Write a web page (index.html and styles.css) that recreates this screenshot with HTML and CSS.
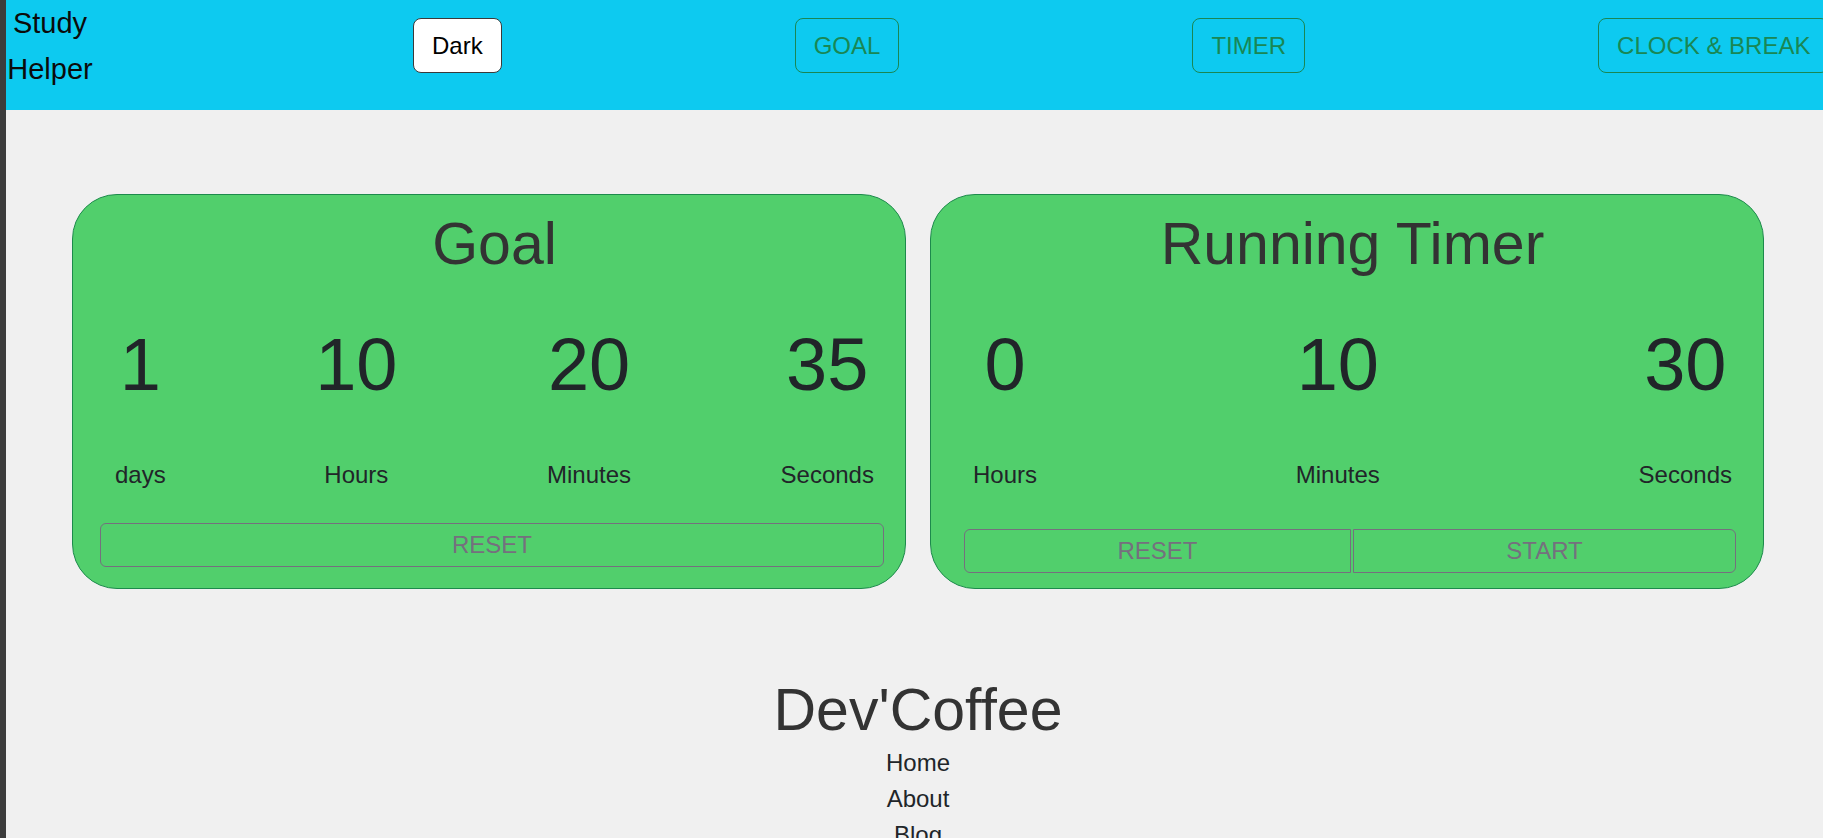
FILE: index.html
```html
<!DOCTYPE html>
<html lang="en">
<head>
<meta charset="utf-8">
<title>Study Helper</title>
<link rel="stylesheet" href="styles.css">
</head>
<body>
  <header class="topbar">
    <div class="brand">Study Helper</div>
    <nav class="nav">
      <button class="nav-btn nav-btn-light">Dark</button>
      <div class="nav-links">
        <button class="nav-btn nav-btn-success">GOAL</button>
        <button class="nav-btn nav-btn-success">TIMER</button>
        <button class="nav-btn nav-btn-success">CLOCK &amp; BREAK</button>
      </div>
    </nav>
  </header>

  <main class="panels">
    <section class="card">
      <div class="card-body">
        <h1 class="card-title">Goal</h1>
        <div class="units">
          <div class="unit"><span class="num">1</span><span class="label">days</span></div>
          <div class="unit"><span class="num">10</span><span class="label">Hours</span></div>
          <div class="unit"><span class="num">20</span><span class="label">Minutes</span></div>
          <div class="unit"><span class="num">35</span><span class="label">Seconds</span></div>
        </div>
      </div>
      <div class="actions actions-goal">
        <button class="btn-outline btn-single">RESET</button>
      </div>
    </section>

    <section class="card">
      <div class="card-body">
        <h1 class="card-title">Running Timer</h1>
        <div class="units">
          <div class="unit"><span class="num">0</span><span class="label">Hours</span></div>
          <div class="unit"><span class="num">10</span><span class="label">Minutes</span></div>
          <div class="unit"><span class="num">30</span><span class="label">Seconds</span></div>
        </div>
      </div>
      <div class="actions actions-timer">
        <button class="btn-outline btn-left">RESET</button>
        <button class="btn-outline btn-right">START</button>
      </div>
    </section>
  </main>

  <footer class="footer">
    <h2 class="footer-title">Dev'Coffee</h2>
    <ul class="footer-links">
      <li><a href="#">Home</a></li>
      <li><a href="#">About</a></li>
      <li><a href="#">Blog</a></li>
    </ul>
  </footer>
</body>
</html>
```

FILE: styles.css
```css
html {
  background: #f0f0f0;
}

body {
  box-sizing: border-box;
  margin: 0;
  min-width: 1830px;
  min-height: 100vh;
  border-left: 6px solid #3c3c3c;
  background: #f0f0f0;
  font-family: "Liberation Sans", Arial, sans-serif;
  color: #212529;
}

/* ---------- header ---------- */
.topbar {
  display: flex;
  align-items: flex-start;
  height: 110px;
  background: #0dcaf0;
}

.brand {
  width: 88px;
  flex: 0 0 88px;
  font-size: 29px;
  line-height: 46px;
  text-align: center;
  color: #0b0b0b;
}

.nav {
  display: flex;
  align-items: center;
  gap: 293px;
  margin-top: 18px;
  margin-left: 319px;
  flex: 0 0 auto;
}

.nav-links {
  display: flex;
  gap: 293px;
}

.nav-btn {
  height: 55px;
  padding: 0 18px;
  font-family: "Liberation Sans", Arial, sans-serif;
  font-size: 24px;
  line-height: 53px;
  border-radius: 8px;
  white-space: nowrap;
  cursor: pointer;
}

.nav-btn-light {
  background: #ffffff;
  border: 1px solid #3a3a3a;
  color: #000000;
}

.nav-btn-success {
  background: transparent;
  border: 1px solid #198754;
  color: #198754;
}

/* ---------- cards ---------- */
.panels {
  display: grid;
  grid-template-columns: 1fr 1fr;
  gap: 24px;
  padding: 84px 66px 0;
}

.card {
  display: flex;
  flex-direction: column;
  background: #51cf6c;
  border: 1px solid #1d8a4c;
  border-radius: 45px;
  padding-top: 15px;
}

.card-body {
  padding: 0 31px 0 42px;
}

.card-title {
  margin: 0;
  font-size: 59px;
  font-weight: 400;
  line-height: 68px;
  text-align: center;
  color: #333333;
}

.units {
  display: flex;
  justify-content: space-between;
  margin-top: 44px;
}

.unit {
  display: flex;
  flex-direction: column;
  align-items: center;
}

.num {
  font-size: 74px;
  line-height: 85px;
  color: #212529;
}

.label {
  margin-top: 54px;
  font-size: 24px;
  line-height: 28px;
  color: #212529;
}

.actions {
  display: flex;
  gap: 2px;
}

.actions-goal {
  margin: 34px 21px 21px 27px;
}

.actions-timer {
  margin: 40px 27px 15px 33px;
}

.btn-outline {
  height: 44px;
  padding: 0;
  background: transparent;
  border: 1px solid #75707e;
  color: #75707e;
  font-family: "Liberation Sans", Arial, sans-serif;
  font-size: 24px;
  line-height: 42px;
  border-radius: 6px;
  cursor: pointer;
}

.btn-single {
  flex: 1 1 auto;
}

.btn-left {
  flex: 387 1 0;
  border-radius: 6px 0 0 6px;
}

.btn-right {
  flex: 383 1 0;
  border-radius: 0 6px 6px 0;
}

/* ---------- footer ---------- */
.footer {
  margin-top: 87px;
  text-align: center;
}

.footer-title {
  margin: 0;
  font-size: 59px;
  font-weight: 400;
  line-height: 69px;
  color: #333333;
}

.footer-links {
  list-style: none;
  margin: 0;
  padding: 0;
}

.footer-links li {
  font-size: 24px;
  line-height: 36px;
}

.footer-links a {
  color: #212529;
  text-decoration: none;
}
```
